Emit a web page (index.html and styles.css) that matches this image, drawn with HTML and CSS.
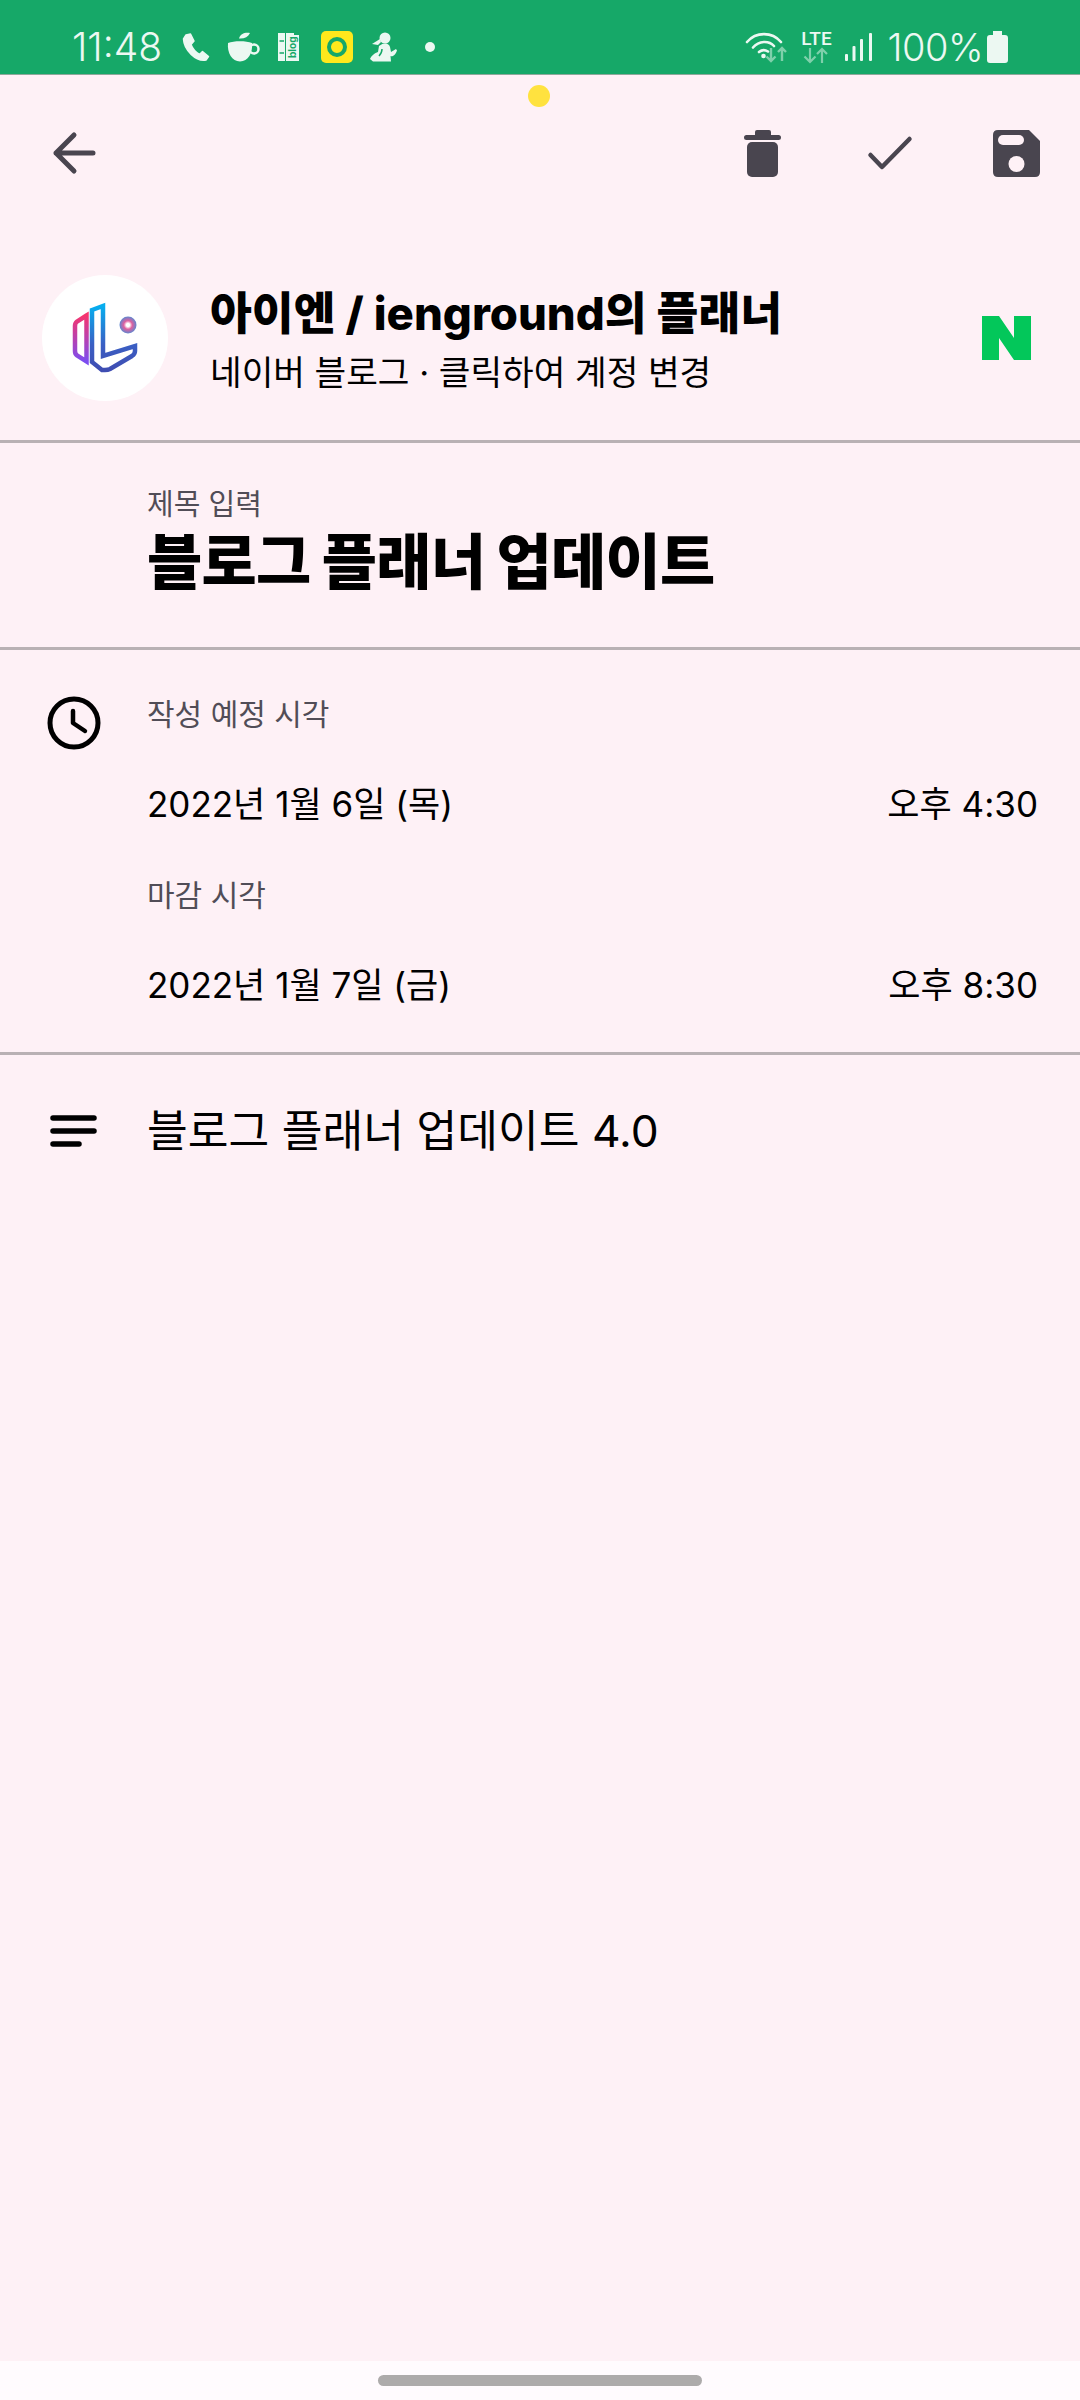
FILE: index.html
```html
<!DOCTYPE html>
<html lang="ko">
<head>
    <meta charset="UTF-8">
    <title>플래너</title>
    <link rel="stylesheet" href="styles.css">
</head>
<body>
    <div class="status-bar">
        <span class="clock-text">11:48</span>
        <svg class="ic-phone" viewBox="0 0 30 30"><path d="M6 3 L10.500 2 L14 9 L11 12.500 C12.500 16.500 15.500 20 19.500 22.500 L22.500 19.500 L28.500 24.500 L26 28 C16 30 4 18 3.500 7 Z" fill="#ecf8f2" stroke="#ecf8f2" stroke-width="1.500" stroke-linejoin="round"/></svg>
        <svg class="ic-cup" viewBox="0 0 32 30"><path d="M0 11 C6 8.500 18 8.500 24 11 C25 21 20 29.500 12 29.500 C4 29.500 -1 21 0 11 Z" fill="#ecf8f2"/><path d="M11 6.500 C12 2 17 0 22 1 C20 5 16 7 11 6.500 Z" fill="#ecf8f2"/><circle cx="26" cy="17" r="4.500" fill="none" stroke="#ecf8f2" stroke-width="2.500"/></svg>
        <svg class="ic-blog" viewBox="0 0 22 28"><path d="M0 0 H7 V28 H0 Z M8 0 H16 V2 H21 V28 H8 Z" fill="#ecf8f2"/><path d="M1.500 8 H6 M1.500 20 H6" stroke="#16a868" stroke-width="1.500"/><text class="blog-word" transform="translate(18 25) rotate(-90)">blog</text></svg>
        <span class="ic-ring"><span class="ring-inner"></span></span>
        <svg class="ic-figure" viewBox="0 0 27 30"><circle cx="15" cy="6" r="5.500" fill="#ecf8f2"/><path d="M10 7 L2 12 L8 13 L11 10 Z" fill="#ecf8f2"/><path d="M9 14 C14 10 19 11 20 15 L21 20 L26 17 L27 18.500 C25 24 22 25 20.500 24 L21 29.500 H3 L0 27 C1 24 5 21 8 20 Z" fill="#ecf8f2"/><path d="M9 24 C11 22 12 20 12 17" fill="none" stroke="#16a868" stroke-width="1.500"/></svg>
        <span class="status-dot"></span>
        <div class="status-right">
            <svg class="ic-wifi" viewBox="0 0 41 32"><g fill="none" stroke="#ecf8f2" stroke-width="2.600" stroke-linecap="round"><path d="M1 11 C10 0.500 26 0.500 35 11"/><path d="M7 16.500 C13 9.500 23 9.500 28 15"/><path d="M13 21 C16 18.500 19 18.500 22 20.500"/></g><circle cx="17.500" cy="25" r="2.300" fill="#ecf8f2"/><g fill="none" stroke="#7fd0ab" stroke-width="2.400"><path d="M25 17 V30 M20.500 25.500 L25 30 L29.500 25.500"/><path d="M36 30 V17 M32 21 L36 17 L40 21"/></g></svg>
            <div class="lte">
                <span class="lte-word">LTE</span>
                <svg class="ic-lte-arrows" viewBox="0 0 30 15"><g fill="none" stroke="#7fd0ab" stroke-width="2.200"><path d="M9 0 V14 M3.500 8.500 L9 14 L14.500 8.500"/><path d="M21 15 V1 M16 6 L21 1 L26 6"/></g></svg>
            </div>
            <svg class="ic-signal" viewBox="0 0 28 28"><g fill="#ecf8f2"><rect x="0" y="21" width="3" height="7" rx="1"/><rect x="7.500" y="13" width="3" height="15" rx="1"/><rect x="15" y="6" width="3" height="22" rx="1"/><rect x="24" y="0" width="3" height="28" rx="1"/></g></svg>
            <span class="batt-text">100%</span>
            <svg class="ic-batt" viewBox="0 0 21 32"><path d="M6 0 H15 V4 H18 Q21 4 21 7 V29 Q21 32 18 32 H3 Q0 32 0 29 V7 Q0 4 3 4 H6 Z" fill="#ecf8f2"/></svg>
        </div>
    </div>

    <div class="cam-dot"></div>

    <div class="toolbar">
        <svg class="ic-back" viewBox="0 0 42 40"><path d="M40 20 H3 M21 2 L3 20 L21 38" fill="none" stroke="#49454f" stroke-width="5" stroke-linecap="round" stroke-linejoin="round"/></svg>
        <div class="toolbar-actions">
            <svg class="ic-trash" viewBox="0 0 37 47"><path d="M11 2 Q11 0 13 0 H25 Q27 0 27 2 V5 H34.500 Q37 5 37 7.500 Q37 10 34.500 10 H2.500 Q0 10 0 7.500 Q0 5 2.500 5 H11 Z" fill="#49454f"/><rect x="3" y="12" width="31" height="35" rx="5" fill="#49454f"/></svg>
            <svg class="ic-check" viewBox="0 0 44 34"><path d="M2.500 19 L14 31 L41.500 3" fill="none" stroke="#49454f" stroke-width="4.500" stroke-linecap="round" stroke-linejoin="round"/></svg>
            <svg class="ic-save" viewBox="0 0 47 47"><path d="M5 0 H36 L47 11 V42 Q47 47 42 47 H5 Q0 47 0 42 V5 Q0 0 5 0 Z" fill="#49454f"/><rect x="5" y="5" width="26" height="10" rx="5" fill="#fef1f6"/><circle cx="23.500" cy="34" r="8" fill="#fef1f6"/></svg>
        </div>
    </div>

    <div class="account">
        <svg class="avatar" viewBox="42 275 126 126">
            <defs>
                <linearGradient id="gradLeft" x1="0" y1="0" x2="0" y2="1"><stop offset="0" stop-color="#f5356f"/><stop offset="1" stop-color="#7c4df0"/></linearGradient>
                <linearGradient id="gradL" x1="0" y1="0" x2="0" y2="1"><stop offset="0" stop-color="#06aeef"/><stop offset="0.6" stop-color="#3a5fc4"/><stop offset="1" stop-color="#3f4db2"/></linearGradient>
                <radialGradient id="gradDot"><stop offset="0.2" stop-color="#ffffff"/><stop offset="0.5" stop-color="#e0609f"/><stop offset="1" stop-color="#5f86cf"/></radialGradient>
            </defs>
            <circle cx="105" cy="338" r="63" fill="#ffffff"/>
            <path d="M86.500 315.500 L77 321.500 Q75 323 75 326 V351 Q75 354 77 355.500 L86.500 361.500 Z" fill="none" stroke="url(#gradLeft)" stroke-width="4.500"/>
            <path d="M92 310 L103 306 V356 L135 346 V351 Q135 354 132 356 L110 369 Q108 370 105 370 H102 L92 362 Z" fill="none" stroke="url(#gradL)" stroke-width="4.500"/>
            <circle cx="128" cy="325" r="8.500" fill="url(#gradDot)"/>
        </svg>
        <div class="account-text">
            <div class="account-name">아이엔 / ienground의 플래너</div>
            <div class="account-sub">네이버 블로그 · 클릭하여 계정 변경</div>
        </div>
        <svg class="ic-naver" viewBox="0 0 49 44"><path d="M0 0 H17 L32 22 V0 H49 V44 H32 L17 22 V44 H0 Z" fill="#03c75a"/></svg>
    </div>

    <div class="title-block">
        <div class="label">제목 입력</div>
        <div class="title">블로그 플래너 업데이트</div>
    </div>

    <div class="time-block">
        <svg class="ic-clock" viewBox="0 0 54 54"><circle cx="27" cy="27" r="24" fill="none" stroke="#000" stroke-width="5"/><path d="M26 15 V27 L38 35" fill="none" stroke="#000" stroke-width="4.500" stroke-linecap="round" stroke-linejoin="round"/></svg>
        <div class="time-list">
            <div class="label first-label">작성 예정 시각</div>
            <div class="time-row first-row"><span>2022년 1월 6일 (목)</span><span>오후 4:30</span></div>
            <div class="label second-label">마감 시각</div>
            <div class="time-row last-row"><span>2022년 1월 7일 (금)</span><span>오후 8:30</span></div>
        </div>
    </div>

    <div class="memo">
        <svg class="ic-lines" viewBox="0 0 47 32"><g fill="none" stroke="#000" stroke-width="5.500" stroke-linecap="round"><path d="M3 3 H44"/><path d="M3 16 H44"/><path d="M3 29 H29"/></g></svg>
        <span class="memo-text">블로그 플래너 업데이트 4.0</span>
    </div>

    <div class="home-wrap"><div class="home-bar"></div></div>
</body>
</html>
```

FILE: styles.css
```css
* {
    box-sizing: border-box;
}

body {
    margin: 0;
    height: 2400px;
    display: flex;
    flex-direction: column;
    position: relative;
    background-color: #fef1f6;
    font-family: "Inter", "Noto Sans CJK KR", sans-serif;
    color: #000;
}

svg {
    display: block;
    flex-shrink: 0;
    overflow: visible;
}

/* status bar */
.status-bar {
    height: 75px;
    padding: 19px 72px 0 72px;
    display: flex;
    align-items: center;
    gap: 18px;
    background-color: #16a868;
    border-bottom: 1px solid #8fa89b;
    color: #ecf8f2;
}

.clock-text {
    font-size: 39px;
    font-weight: 300;
    line-height: 46px;
}

.ic-phone { width: 30px; height: 30px; }
.ic-cup { width: 32px; height: 30px; }
.ic-blog { width: 22px; height: 28px; }
.ic-figure { width: 27px; height: 30px; margin-left: -1px; }

.blog-word {
    font-family: "Inter", sans-serif;
    font-size: 10px;
    font-weight: 700;
    fill: #16a868;
}

.ic-ring {
    width: 32px;
    height: 32px;
    margin-left: 3px;
    display: flex;
    align-items: center;
    justify-content: center;
    background-color: #ffe81c;
    border-radius: 5px;
}

.ring-inner {
    width: 20px;
    height: 20px;
    border: 4px solid #16a868;
    border-radius: 50%;
}

.status-dot {
    width: 10px;
    height: 10px;
    margin-left: 10px;
    background-color: #ecf8f2;
    border-radius: 50%;
}

.status-right {
    margin-left: auto;
    display: flex;
    align-items: center;
    gap: 14px;
}

.ic-wifi { width: 41px; height: 32px; }

.lte {
    width: 30px;
    display: flex;
    flex-direction: column;
    align-items: center;
}

.lte-word {
    font-family: "Roboto", sans-serif;
    font-size: 19px;
    font-weight: 500;
    line-height: 16px;
}

.ic-lte-arrows { width: 30px; height: 15px; margin-top: 1px; }
.ic-signal { width: 28px; height: 28px; }

.batt-text {
    font-size: 38px;
    font-weight: 300;
    line-height: 46px;
    letter-spacing: -0.5px;
}

.ic-batt {
    width: 21px;
    height: 32px;
    margin-left: -10px;
}

/* overlay dot from the screen recorder */
.cam-dot {
    position: absolute;
    left: 528px;
    top: 85px;
    width: 22px;
    height: 22px;
    background-color: #ffe23f;
    border-radius: 50%;
}

/* toolbar */
.toolbar {
    height: 156px;
    padding: 0 40px 0 53px;
    display: flex;
    align-items: center;
    justify-content: space-between;
}

.ic-back { width: 42px; height: 40px; }

.toolbar-actions {
    display: flex;
    align-items: center;
    gap: 81px;
}

.ic-trash { width: 37px; height: 47px; margin-right: 6px; }
.ic-check { width: 44px; height: 34px; }
.ic-save { width: 47px; height: 47px; }

/* account */
.account {
    padding: 44px 49px 39px 42px;
    display: flex;
    align-items: center;
    border-bottom: 3px solid #b9b1b4;
}

.avatar { width: 126px; height: 126px; }

.account-text {
    flex: 1;
    margin-left: 42px;
    padding-top: 7px;
}

.account-name {
    font-size: 45.5px;
    font-weight: 800;
    line-height: 52px;
}

.account-sub {
    margin-top: 10px;
    font-size: 34.4px;
    line-height: 46px;
}

.ic-naver { width: 49px; height: 44px; }

/* title */
.title-block {
    padding: 42px 0 45px 147px;
    border-bottom: 3px solid #b9b1b4;
}

.label {
    font-size: 29px;
    line-height: 40px;
    color: #514d57;
}

.title {
    margin-top: -3px;
    font-size: 60px;
    font-weight: 900;
    line-height: 80px;
    letter-spacing: -0.7px;
}

/* times */
.time-block {
    padding: 46px 42px 43px 47px;
    display: flex;
    align-items: flex-start;
    border-bottom: 3px solid #b9b1b4;
}

.ic-clock { width: 54px; height: 54px; }

.time-list {
    flex: 1;
    margin-left: 46px;
}

.time-list .label { font-size: 30px; }

.first-label { margin-top: -2px; }

.time-row {
    display: flex;
    justify-content: space-between;
    font-size: 35px;
    line-height: 48px;
}

.first-row { margin-top: 46px; }
.second-label { margin-top: 47px; }
.last-row { margin-top: 46px; }

/* memo */
.memo {
    padding: 48px 0 0 50px;
    display: flex;
    align-items: center;
}

.ic-lines { width: 47px; height: 32px; }

.memo-text {
    margin-left: 50px;
    font-size: 44.3px;
    line-height: 56px;
}

/* home indicator */
.home-wrap {
    margin-top: auto;
    height: 39px;
    padding-top: 14px;
    display: flex;
    justify-content: center;
    background-color: #fffbfe;
}

.home-bar {
    width: 324px;
    height: 11px;
    background-color: #adabab;
    border-radius: 6px;
}
```
